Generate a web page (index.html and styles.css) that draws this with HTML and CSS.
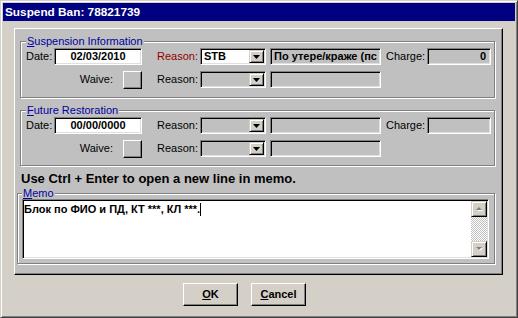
FILE: index.html
```html
<!DOCTYPE html>
<html>
<head>
<meta charset="utf-8">
<link rel="stylesheet" href="styles.css">
</head>
<body>
<div class="window">
  <div class="titlebar">Suspend Ban: 78821739</div>
  <div class="panel">
    <fieldset class="group g1">
      <legend><u>S</u>uspension Information</legend>
      <div class="row">
        <span class="lbl date-lbl">Date:</span>
        <div class="field date">02/03/2010</div>
        <span class="lbl reason-lbl red">Reason:</span>
        <div class="combo"><span class="combo-text">STB</span><span class="combo-btn"><svg width="7" height="4" viewBox="0 0 7 4"><path d="M0 0h7L3.5 4z" fill="#000"/></svg></span></div>
        <div class="field desc">По утере/краже (пс</div>
        <span class="lbl charge-lbl">Charge:</span>
        <div class="field charge">0</div>
      </div>
      <div class="row row2">
        <span class="lbl waive-lbl">Waive:</span>
        <div class="chk"></div>
        <span class="lbl reason-lbl">Reason:</span>
        <div class="combo off"><span class="combo-text"></span><span class="combo-btn"><svg width="7" height="4" viewBox="0 0 7 4"><path d="M0 0h7L3.5 4z" fill="#000"/></svg></span></div>
        <div class="field desc"></div>
      </div>
    </fieldset>
    <fieldset class="group g2">
      <legend><u>F</u>uture Restoration</legend>
      <div class="row">
        <span class="lbl date-lbl">Date:</span>
        <div class="field date">00/00/0000</div>
        <span class="lbl reason-lbl">Reason:</span>
        <div class="combo off"><span class="combo-text"></span><span class="combo-btn"><svg width="7" height="4" viewBox="0 0 7 4"><path d="M0 0h7L3.5 4z" fill="#000"/></svg></span></div>
        <div class="field desc"></div>
        <span class="lbl charge-lbl">Charge:</span>
        <div class="field charge"></div>
      </div>
      <div class="row row2">
        <span class="lbl waive-lbl">Waive:</span>
        <div class="chk"></div>
        <span class="lbl reason-lbl">Reason:</span>
        <div class="combo off"><span class="combo-text"></span><span class="combo-btn"><svg width="7" height="4" viewBox="0 0 7 4"><path d="M0 0h7L3.5 4z" fill="#000"/></svg></span></div>
        <div class="field desc"></div>
      </div>
    </fieldset>
    <div class="hint">Use Ctrl + Enter to open a new line in memo.</div>
    <fieldset class="group memo-group">
      <legend><u>M</u>emo</legend>
      <div class="memo">
        <div class="memo-text">Блок по ФИО и ПД, КТ ***, КЛ ***.<span class="caret"></span></div>
        <div class="scroll">
          <div class="sbtn"><svg width="7" height="5" viewBox="0 0 7 5"><path d="M1 4h6L4 1z" fill="#fff"/><path d="M0 3h6L3 0z" fill="#808080"/></svg></div>
          <div class="track"></div>
          <div class="sbtn"><svg width="7" height="5" viewBox="0 0 7 5"><path d="M1 1h6L4 4z" fill="#fff"/><path d="M0 0h6L3 3z" fill="#808080"/></svg></div>
        </div>
      </div>
    </fieldset>
  </div>
  <div class="buttons">
    <div class="pbtn"><u>O</u>K</div>
    <div class="pbtn"><u>C</u>ancel</div>
  </div>
</div>
</body>
</html>
```
FILE: styles.css
```css
html, body {
  margin: 0;
  padding: 0;
  background: #d4d0c8;
}
body {
  font-family: "Liberation Sans", Arial, sans-serif;
  font-size: 11px;
  color: #000;
}
.window {
  width: 518px;
  height: 318px;
  box-sizing: border-box;
  border: 1px solid;
  border-color: #d4d0c8 #404040 #404040 #d4d0c8;
  box-shadow: inset 1px 1px #fff, inset -1px -1px #808080;
  padding: 2px;
  background: #d4d0c8;
  display: flex;
  flex-direction: column;
}
.titlebar {
  height: 18px;
  background: #000080;
  color: #fff;
  font-weight: bold;
  font-size: 11.8px;
  line-height: 18px;
  padding-left: 2px;
  white-space: nowrap;
}
.panel {
  margin: 7px 12px 0 11px;
  height: 247px;
  box-sizing: border-box;
  background: #c0c0c0;
  border: 1px solid;
  border-color: #fff #000 #000 #fff;
  box-shadow: inset -1px -1px #808080;
  padding: 6px 7px 0 5px;
  display: flex;
  flex-direction: column;
}
.group {
  margin: 0;
  padding: 0 0 9px 5px;
  border: 1px solid #808080;
  box-shadow: inset 1px 1px #fff, 1px 1px #fff;
  min-width: 0;
}
.group legend {
  padding: 0 1px;
  font-size: 11px;
  line-height: 13px;
  color: #0000a0;
  background: #c0c0c0;
}
.g2 {
  margin-top: 6px;
  padding-bottom: 8px;
}
.row {
  display: flex;
  align-items: flex-start;
  height: 17px;
}
.row2 {
  margin-top: 6px;
}
.lbl {
  line-height: 17px;
  white-space: nowrap;
}
.red { color: #900000; }
.date-lbl { width: 28px; }
.waive-lbl {
  width: 97px;
  box-sizing: border-box;
  text-align: right;
  padding-right: 10px;
}
.reason-lbl {
  margin-left: 15px;
  width: 43px;
}
.charge-lbl {
  margin-left: 5px;
  width: 41px;
}
.field {
  height: 17px;
  box-sizing: border-box;
  border: 1px solid;
  border-color: #808080 #fff #fff #808080;
  box-shadow: inset 1px 1px #000, inset -1px -1px #dfdfdf;
  background: #c0c0c0;
  font-weight: bold;
  line-height: 15px;
  padding: 0 3px;
  overflow: hidden;
  white-space: nowrap;
}
.date {
  width: 88px;
  background: #fff;
  text-align: center;
}
.desc {
  width: 111px;
  margin-left: 4px;
}
.charge {
  width: 64px;
  text-align: right;
  padding-right: 4px;
}
.combo {
  width: 66px;
  height: 17px;
  box-sizing: border-box;
  border: 1px solid;
  border-color: #808080 #fff #fff #808080;
  box-shadow: inset 1px 1px #000, inset -1px -1px #dfdfdf;
  padding: 1px;
  background: #fff;
  display: flex;
}
.combo.off { background: #c0c0c0; }
.combo-text {
  flex: 1;
  font-weight: bold;
  line-height: 13px;
  padding-left: 2px;
}
.combo-btn {
  width: 15px;
  height: 13px;
  box-sizing: border-box;
  background: #d4d0c8;
  border: 1px solid;
  border-color: #d4d0c8 #000 #000 #d4d0c8;
  box-shadow: inset 1px 1px #fff, inset -1px -1px #808080;
  display: flex;
  align-items: center;
  justify-content: center;
}
.chk {
  width: 19px;
  height: 18px;
  box-sizing: border-box;
  background: #c0c0c0;
  border: 1px solid;
  border-color: #fff #000 #000 #fff;
  box-shadow: inset -1px -1px #808080;
}
.hint {
  margin-top: 5px;
  font-weight: bold;
  font-size: 13px;
  line-height: 15px;
  padding-left: 1px;
  white-space: nowrap;
}
.memo-group {
  margin-top: 1px;
  margin-left: -3px;
  padding: 0 0 4px 4px;
}
.memo {
  margin-top: -1px;
  width: 467px;
  height: 60px;
  box-sizing: border-box;
  border: 1px solid;
  border-color: #808080 #fff #fff #808080;
  box-shadow: inset 1px 1px #000, inset -1px -1px #dfdfdf;
  padding: 1px;
  background: #fff;
  display: flex;
}
.memo-text {
  flex: 1;
  font-weight: bold;
  font-size: 11px;
  line-height: 14px;
  padding-top: 1px;
  white-space: nowrap;
}
.caret {
  display: inline-block;
  width: 1px;
  height: 13px;
  background: #000;
  vertical-align: -3px;
}
.scroll {
  width: 16px;
  display: flex;
  flex-direction: column;
}
.sbtn {
  height: 16px;
  box-sizing: border-box;
  background: #d4d0c8;
  border: 1px solid;
  border-color: #d4d0c8 #000 #000 #d4d0c8;
  box-shadow: inset 1px 1px #fff, inset -1px -1px #808080;
  display: flex;
  align-items: center;
  justify-content: center;
}
.track {
  flex: 1;
  background: repeating-conic-gradient(#fff 0 25%, #c0c0c0 0 50%);
  background-size: 2px 2px;
}
.buttons {
  display: flex;
  margin-top: 8px;
  padding-left: 180px;
  gap: 13px;
}
.pbtn {
  width: 55px;
  height: 23px;
  box-sizing: border-box;
  background: #d4d0c8;
  border: 1px solid;
  border-color: #fff #000 #000 #fff;
  box-shadow: inset -1px -1px #808080;
  font-weight: bold;
  line-height: 21px;
  text-align: center;
}
```
